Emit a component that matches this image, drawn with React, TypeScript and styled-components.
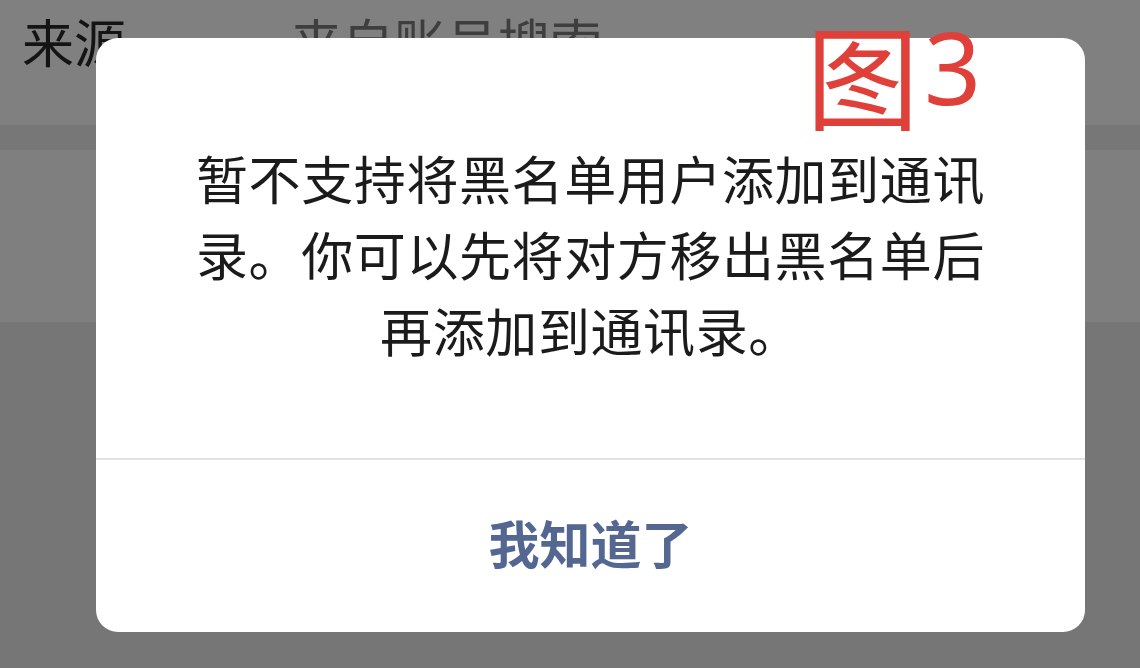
import React from "react";
import styled, { createGlobalStyle } from "styled-components";

const Global = createGlobalStyle`
  html, body { margin: 0; padding: 0; }
  body {
    width: 1140px;
    height: 668px;
    overflow: hidden;
    font-family: "Noto Sans CJK SC", "Noto Sans", sans-serif;
    background: #767676;
  }
`;

const Page = styled.div`
  position: relative;
  width: 1140px;
  height: 668px;
  display: flex;
  flex-direction: column;
  background: #767676;
`;

const InfoRow = styled.div`
  height: 125px;
  background: #808080;
  display: flex;
  align-items: flex-start;
  padding: 6px 0 0 22px;
  box-sizing: border-box;
  font-size: 52px;
  line-height: 70px;
`;

const Label = styled.span`
  width: 268px;
  color: #141414;
`;

const Value = styled.span`
  color: #3e3e3e;
`;

const Gap = styled.div`
  height: 25px;
  background: #777777;
`;

const Section = styled.div`
  height: 172px;
  background: #7f7f7f;
`;

const Overlay = styled.div`
  position: absolute;
  inset: 0;
  padding: 38px 0 0 96px;
  box-sizing: border-box;
`;

const Dialog = styled.div`
  position: relative;
  width: 989px;
  height: 594px;
  background: #ffffff;
  border-radius: 22px;
  display: flex;
  flex-direction: column;
  overflow: hidden;
`;

const Message = styled.div`
  height: 422px;
  box-sizing: border-box;
  padding: 102px 96px 0;
  text-align: center;
  font-size: 52px;
  line-height: 76px;
  letter-spacing: 0.6px;
  color: #1b1b1b;
  border-bottom: 2px solid #e2e2e2;
`;

const Action = styled.button`
  flex: 1;
  border: none;
  background: transparent;
  font-family: "Noto Sans CJK SC", sans-serif;
  font-weight: 700;
  font-size: 51px;
  color: #536791;
  padding: 0 0 8px;
  cursor: pointer;
`;

const Annotation = styled.div`
  position: absolute;
  left: 806px;
  top: -4px;
  color: #e0403a;
  font-size: 113px;
  line-height: 140px;
  white-space: nowrap;
`;

const Digit = styled.span`
  font-family: "Noto Sans", sans-serif;
  font-size: 100px;
  margin-left: 5px;
  vertical-align: 16px;
`;

export default function App() {
  return (
    <>
      <Global />
      <Page>
        <InfoRow>
          <Label>来源</Label>
          <Value>来自账号搜索</Value>
        </InfoRow>
        <Gap />
        <Section />
        <Overlay>
          <Dialog>
            <Message>
              暂不支持将黑名单用户添加到通讯录。你可以先将对方移出黑名单后再添加到通讯录。
            </Message>
            <Action>我知道了</Action>
          </Dialog>
        </Overlay>
        <Annotation>
          图<Digit>3</Digit>
        </Annotation>
      </Page>
    </>
  );
}
